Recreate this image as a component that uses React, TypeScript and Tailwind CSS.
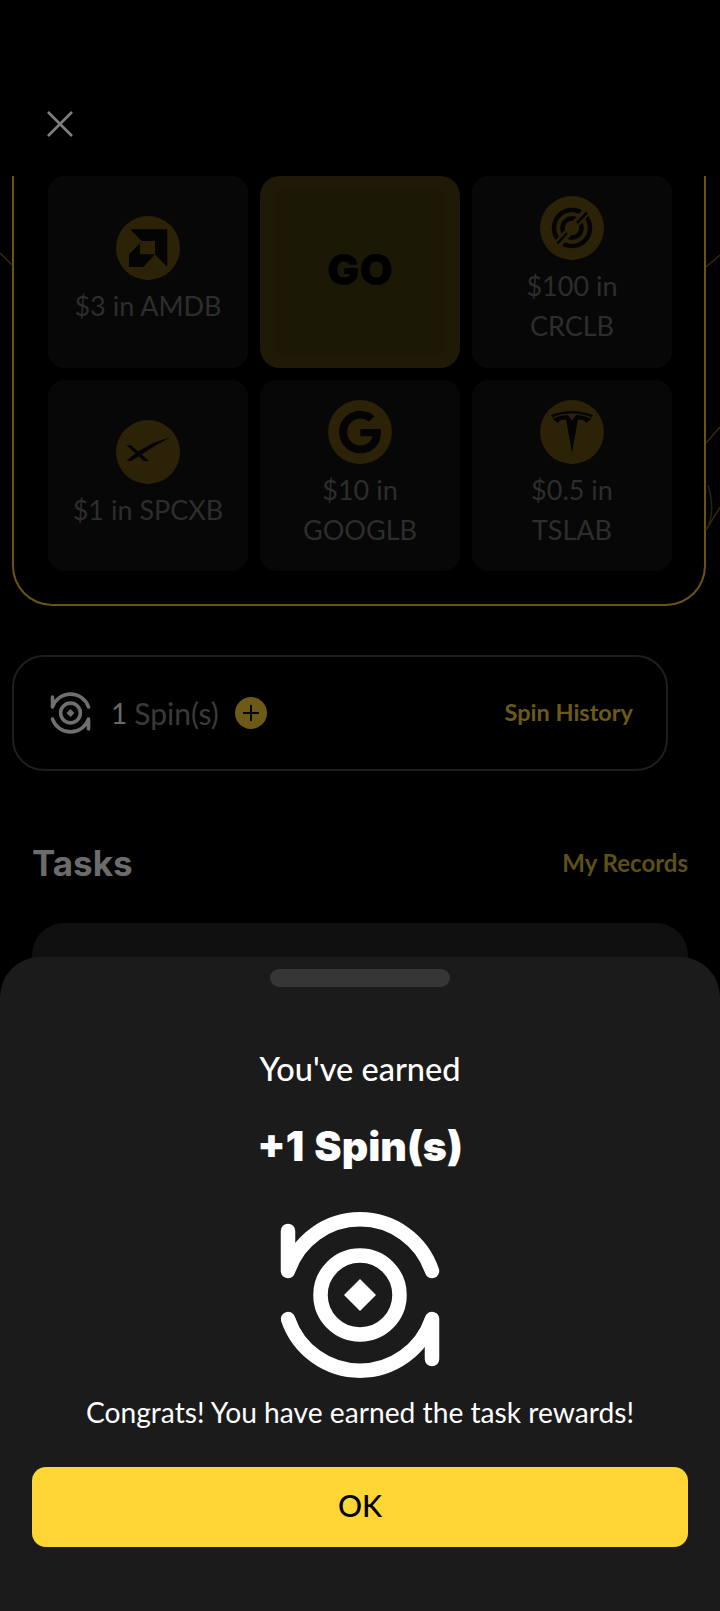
import React from "react";
import { FaGoogle } from "react-icons/fa";
import { SiTesla } from "react-icons/si";

function SpinIcon({ className, color }: { className: string; color: string }) {
  return (
    <svg viewBox="-82 -84 164 168" className={className} fill="none" stroke={color} strokeWidth="14.5" strokeLinecap="round" strokeLinejoin="round">
      <path d="M72 -24 A76 76 0 0 0 -72 -24 V-64" />
      <path d="M-72 24 A76 76 0 0 0 72 24 V64" />
      <circle cx="0" cy="0" r="39.5" />
      <path d="M0 -16 L16 0 L0 16 L-16 0 Z" fill={color} stroke="none" />
    </svg>
  );
}

function AmdLogo() {
  return (
    <svg viewBox="0 0 64 64" className="h-full w-full" fill="#040404">
      <polygon points="14,13.3 51.3,13.3 51.3,51 39,38.3 39,25 25.7,25" />
      <polygon points="25.7,25.7 13,38.3 13,51 27.3,51 39,38.3 24,38.3 24,26.7" />
    </svg>
  );
}

function CrclLogo() {
  return (
    <svg viewBox="0 0 64 64" className="h-full w-full" fill="none" stroke="#040404">
      <circle cx="32" cy="32" r="18" strokeWidth="4.5" />
      <circle cx="32" cy="32" r="9.5" strokeWidth="4.5" />
      <path d="M17 49 L47 15" stroke="#2b2208" strokeWidth="8" />
      <path d="M17.5 47.5 L27 37" strokeWidth="2.6" />
      <path d="M37 27 L47 16.5" strokeWidth="2.6" />
    </svg>
  );
}

function SpacexLogo() {
  return (
    <svg viewBox="0 0 64 64" className="h-full w-full" fill="#040404">
      <polygon points="10.7,25.3 15,25.3 33,41 28,41" />
      <path d="M10.5 41 C22 30 36 22 54 17.7 C40 24 30 32 15 41 Z" />
    </svg>
  );
}

const prizes = [
  { label: ["$3 in AMDB"], logo: <AmdLogo /> },
  { go: true },
  { label: ["$100 in", "CRCLB"], logo: <CrclLogo /> },
  { label: ["$1 in SPCXB"], logo: <SpacexLogo /> },
  {
    label: ["$10 in", "GOOGLB"],
    logo: (
      <div className="flex h-full w-full items-center justify-center">
        <FaGoogle size={44} color="#040404" />
      </div>
    ),
  },
  {
    label: ["$0.5 in", "TSLAB"],
    logo: (
      <div className="flex h-full w-full items-center justify-center">
        <SiTesla size={42} color="#040404" />
      </div>
    ),
  },
];

function App() {
  return (
    <div className="relative h-[1611px] w-[720px] overflow-hidden bg-black font-['Lato',sans-serif]">
      {/* dimmed page behind the sheet */}
      <div className="h-[176px] pl-[47px] pt-[111px]">
        <svg width="26" height="26" viewBox="0 0 26 26" stroke="#7f7f7f" strokeWidth="2.6">
          <path d="M1 1 L25 25 M25 1 L1 25" />
        </svg>
      </div>

      <div className="mx-[12px] w-[694px] rounded-b-[40px] border-x-2 border-b-2 border-[#6b5413] pl-[34px] pr-[32px] pb-[33px]">
        <div className="grid grid-cols-[200px_200px_200px] gap-[12px]">
          {prizes.map((p, i) =>
            p.go ? (
              <div key={i} className="flex h-[191.5px] items-center justify-center rounded-[20px] bg-[#1f1a07] px-[15px] py-[14px]">
                <div className="flex h-full w-full items-center justify-center bg-[#1c1806]">
                  <span className="mb-[4px] font-['Inter',sans-serif] text-[43px] font-black leading-none text-black">GO</span>
                </div>
              </div>
            ) : (
              <div key={i} className="flex h-[191.5px] flex-col items-center justify-center rounded-[16px] bg-[#070707] pb-[1.5px]">
                <div className="mb-[6px] h-[64px] w-[64px] rounded-full bg-[#2b2208]">{p.logo}</div>
                {p.label?.map((line) => (
                  <div key={line} className="text-[27px] leading-[40px] text-[#2d2d2d]">
                    {line}
                  </div>
                ))}
              </div>
            )
          )}
        </div>
      </div>

      {/* faint rays around the panel */}
      <svg className="absolute left-0 top-0" width="720" height="620" fill="none" stroke="#33280d" strokeWidth="1.5">
        <path d="M0 253 L12 265" />
        <path d="M706 267 L720 255" />
        <path d="M706 443 L720 427" />
        <path d="M706 530 L720 507" />
        <path d="M708 485 C714 505 712 520 706 530" stroke="#2c2209" />
      </svg>

      <div className="mx-[12px] mt-[49px] flex h-[116px] w-[656px] items-center rounded-[32px] border-2 border-[#1e1e1e] pl-[36px] pr-[33px]">
        <SpinIcon className="h-[42px] w-[41px]" color="#6f6f6f" />
        <span className="ml-[20px] text-[28px] text-[#6a6a6a]">1</span>
        <span className="ml-[7px] text-[30px] text-[#3a3a3a]">Spin(s)</span>
        <div className="ml-[16px] flex h-[32px] w-[32px] items-center justify-center rounded-full bg-[#6e5a17]">
          <svg width="20" height="20" viewBox="0 0 20 20" stroke="#050505" strokeWidth="2">
            <path d="M10 2 V18 M2 10 H18" />
          </svg>
        </div>
        <span className="ml-auto text-[23.5px] font-bold text-[#6b5a18]">Spin History</span>
      </div>

      <div className="mx-[32px] mt-[68px] flex items-center justify-between">
        <span className="font-['Inter',sans-serif] text-[35px] font-bold leading-[48px] text-[#6c6c6c]">Tasks</span>
        <span className="text-[24px] font-bold text-[#5f5016]">My Records</span>
      </div>

      <div className="mx-[32px] mt-[36px] h-[300px] rounded-[32px] bg-[#101010]" />

      {/* bottom sheet */}
      <div className="absolute bottom-0 left-0 flex h-[654px] w-[720px] flex-col items-center rounded-t-[40px] bg-[#1b1b1b] px-[32px] pt-[12px] text-white">
        <div className="h-[18px] w-[180px] rounded-[9px] bg-[#363636]" />
        <div className="mt-[62px] text-[32.5px] font-medium leading-[40px]">You've earned</div>
        <div className="mt-[32px] font-['Inter',sans-serif] text-[41px] font-black leading-[50px] [word-spacing:2px]">+1 Spin(s)</div>
        <SpinIcon className="mt-[40px] h-[168px] w-[164px]" color="#ffffff" />
        <div className="mt-[15px] text-[28.2px] leading-[36px]">Congrats! You have earned the task rewards!</div>
        <button className="mt-[37px] flex h-[80px] w-[656px] items-center justify-center rounded-[14px] bg-[#ffd633] pb-[3px] text-[30px] font-medium text-black">
          OK
        </button>
      </div>
    </div>
  );
}

export default App;
